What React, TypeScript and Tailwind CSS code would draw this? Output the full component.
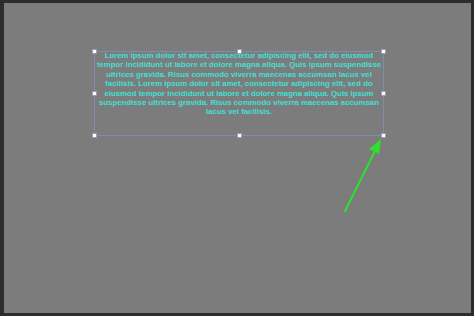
const lines = [
  'Lorem ipsum dolor sit amet, consectetur adipiscing elit, sed do eiusmod',
  'tempor incididunt ut labore et dolore magna aliqua. Quis ipsum suspendisse',
  'ultrices gravida. Risus commodo viverra maecenas accumsan lacus vel',
  'facilisis. Lorem ipsum dolor sit amet, consectetur adipiscing elit, sed do',
  'eiusmod tempor incididunt ut labore et dolore magna aliqua. Quis ipsum',
  'suspendisse ultrices gravida. Risus commodo viverra maecenas accumsan',
  'lacus vel facilisis.',
];

const Handle = () => <div className="w-[5px] h-[5px] bg-white border border-[#9aa0aa]" />;

const HandleRow = ({ middle = true }: { middle?: boolean }) => (
  <div className="flex justify-between">
    <Handle />
    {middle && <Handle />}
    <Handle />
  </div>
);

export default function App() {
  return (
    <div className="w-[474px] h-[316px] bg-[#2c2c2c] pl-[4px] pt-[3px] pr-[3px] pb-[3px] flex">
      <div className="relative flex-1 bg-[#7c7c7c]">
        {/* selected text box on the canvas */}
        <div className="absolute left-[90px] top-[48px] w-[290px] h-[85px] border border-[#7f8cab]">
          <div
            className="-mt-[1px] text-center text-[#3fe0d4] font-bold text-[7.8px] leading-[9.4px]"
            style={{ fontFamily: '"Liberation Sans", Arial, sans-serif' }}
          >
            {lines.map((l) => (
              <div key={l} className="whitespace-nowrap">{l}</div>
            ))}
          </div>
          {/* resize handles */}
          <div className="absolute -inset-[3px] flex flex-col justify-between">
            <HandleRow />
            <HandleRow middle={false} />
            <HandleRow />
          </div>
        </div>
        {/* arrow */}
        <svg className="absolute left-0 top-0" width="470" height="313">
          <line x1="341" y1="208" x2="372" y2="146" stroke="#2ee02e" strokeWidth="2" strokeLinecap="round" />
          <polygon points="377,136 365,146 375,151" fill="#2ee02e" />
        </svg>
      </div>
    </div>
  );
}
